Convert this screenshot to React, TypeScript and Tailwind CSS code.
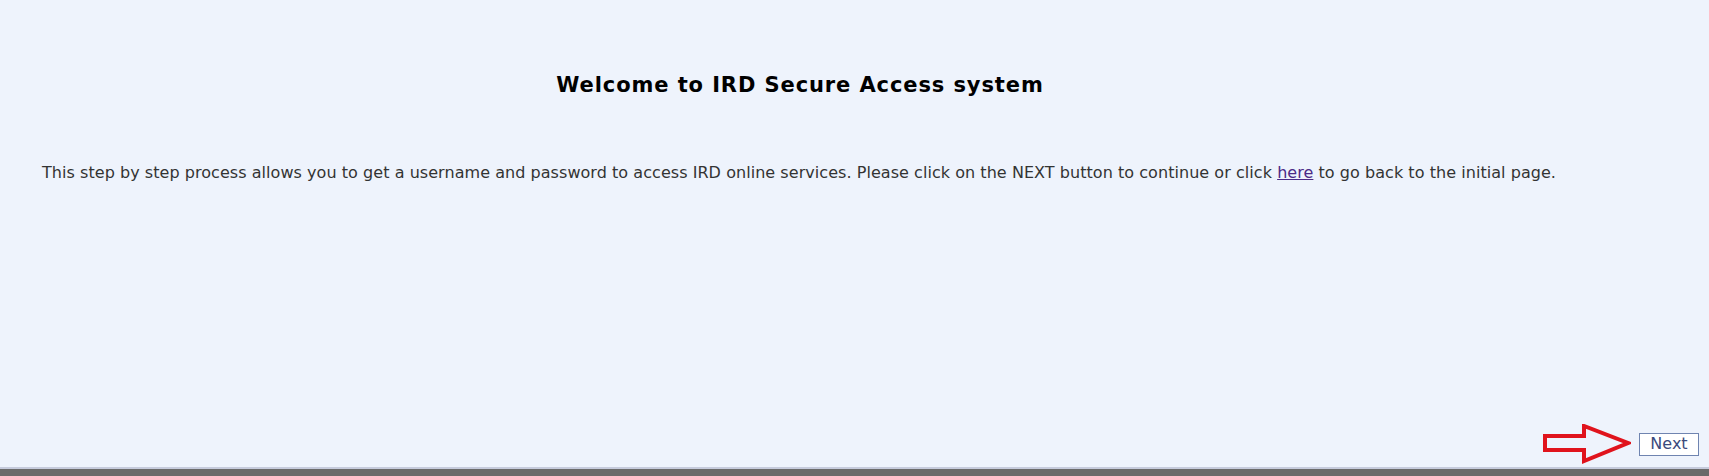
export default function App() {
  return (
    <div className="h-[476px] flex flex-col bg-[#eef3fc] font-['Verdana','DejaVu_Sans',sans-serif]">
      <div className="flex-1 flex flex-col">
        <h1 className="w-[1600px] text-center text-[21px] leading-[24px] tracking-[0.9px] font-bold text-black mt-[73px]">
          Welcome to IRD Secure Access system
        </h1>
        <p className="mt-[66px] pl-[42px] text-[16px] leading-[20px] tracking-[0.05px] text-[#333333]">
          This step by step process allows you to get a username and password to access IRD online services. Please click on the NEXT button to continue or click{' '}
          <a href="#" className="text-[#4b2a86] underline">here</a> to go back to the initial page.
        </p>
        <div className="mt-auto flex justify-end items-center gap-[8px] pr-[10px] pb-[3px]">
          <svg width="88" height="40" viewBox="0 0 88 40">
            <polygon
              points="2,12 41,12 41,2 85,19 41,37 41,26 2,26"
              fill="none"
              stroke="#e0131c"
              strokeWidth="4"
              strokeLinejoin="miter"
            />
          </svg>
          <button className="w-[60px] h-[23px] bg-white border border-[#6f84b0] text-[16px] leading-[20px] text-[#3c4a7c]">
            Next
          </button>
        </div>
      </div>
      <div className="h-[9px] border-t-2 border-[#c6cbdc] bg-[#6a6a6a]" />
    </div>
  );
}
